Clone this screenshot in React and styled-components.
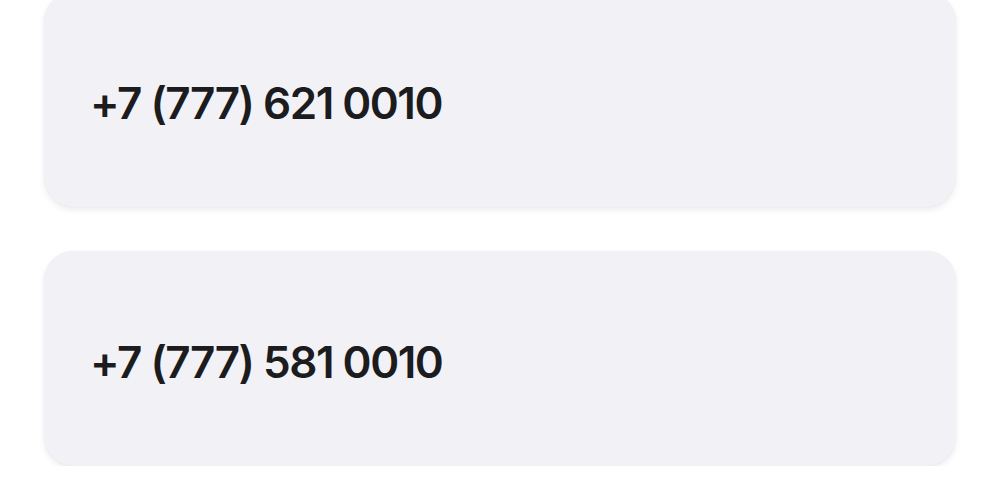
import React from "react";
import styled, { createGlobalStyle } from "styled-components";

const Global = createGlobalStyle`
  html, body { margin: 0; padding: 0; background: #ffffff; }
  body { font-family: Inter, "Noto Sans", sans-serif; overflow: hidden; }
`;

const List = styled.div`
  display: flex;
  flex-direction: column;
  gap: 44px;
  padding: 0 44px;
  margin-top: -8px;
`;

const Card = styled.div`
  height: 215px;
  box-sizing: border-box;
  background: #f2f2f6;
  border-radius: 30px;
  box-shadow: 0 3px 6px rgba(0, 0, 0, 0.08), 0 0 1px rgba(0, 0, 0, 0.07);
  display: flex;
  align-items: center;
  padding: 6px 46px 0;
`;

const Phone = styled.span`
  font-family: Inter, "Noto Sans", sans-serif;
  font-weight: 600;
  font-size: 44px;
  letter-spacing: -1.5px;
  color: #1c1c1e;
`;

const phones = ["+7 (777) 621 0010", "+7 (777) 581 0010"];

export default function App() {
  return (
    <>
      <Global />
      <List>
        {phones.map((p) => (
          <Card key={p}>
            <Phone>{p}</Phone>
          </Card>
        ))}
      </List>
    </>
  );
}
